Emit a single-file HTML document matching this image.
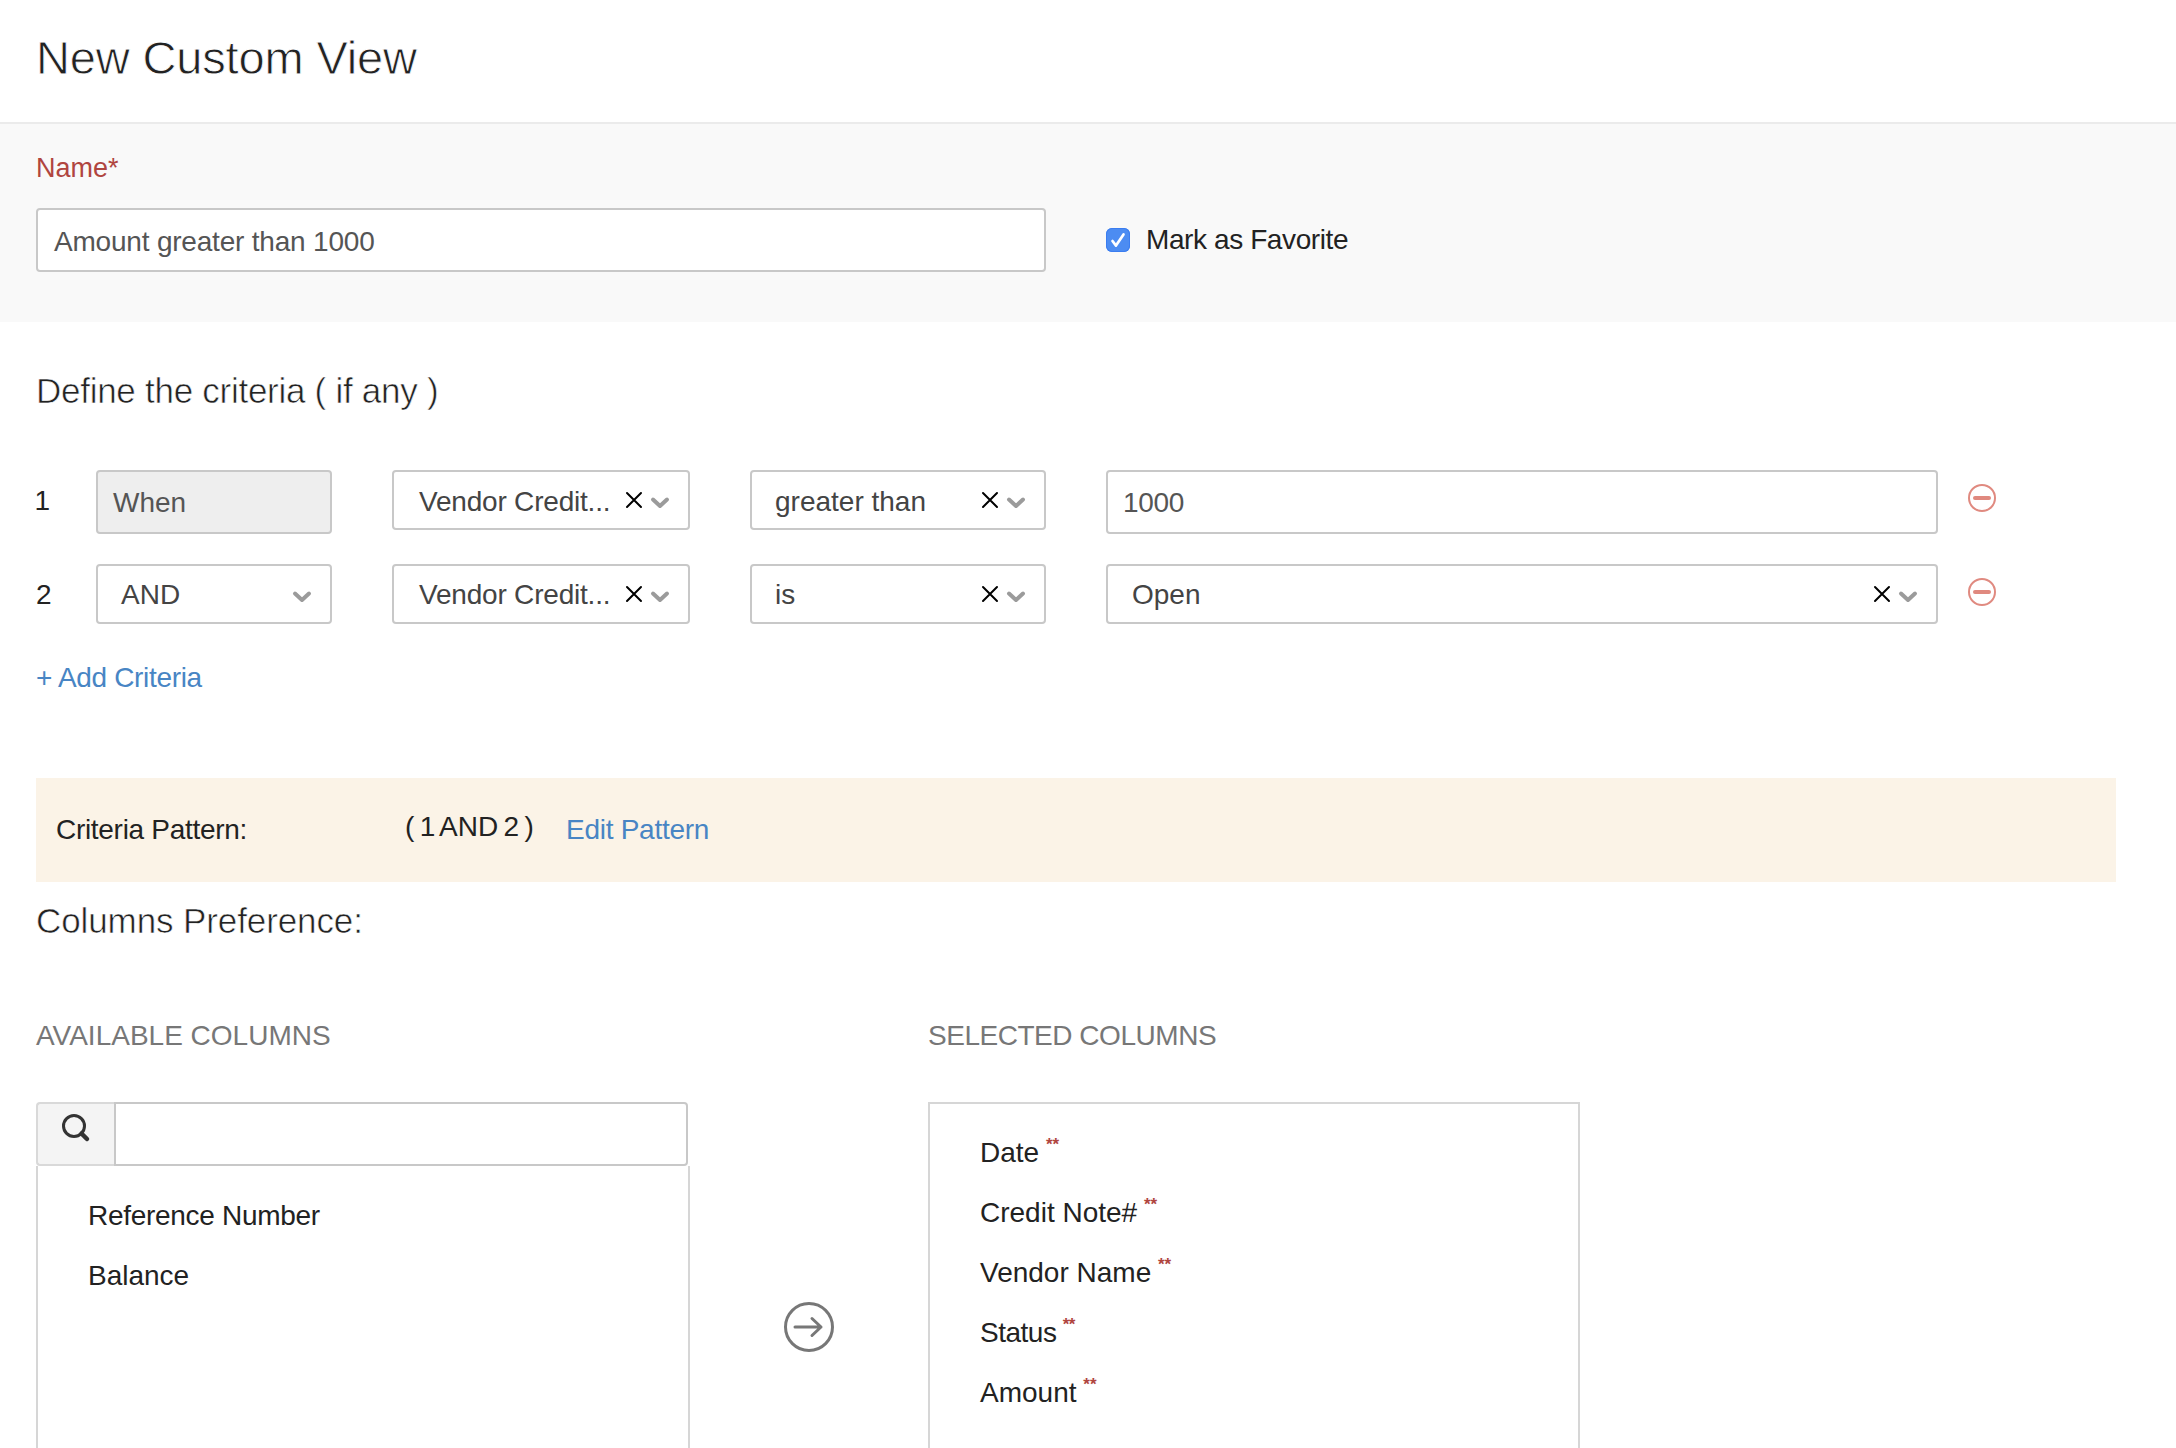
<!DOCTYPE html>
<html>
<head>
<meta charset="utf-8">
<style>
html,body{margin:0;padding:0;}
body{width:2176px;height:1448px;position:relative;overflow:hidden;background:#fff;font-family:"Liberation Sans",sans-serif;color:#222;}
.a{position:absolute;white-space:nowrap;}
.t28{font-size:28px;line-height:32px;}
.box{position:absolute;box-sizing:border-box;border:2px solid #c8c8c8;border-radius:4px;background:#fff;}
svg{position:absolute;overflow:visible;}
</style>
</head>
<body>
<!-- header -->
<div class="a" style="left:36px;top:32px;font-size:47px;line-height:52px;letter-spacing:-0.15px;color:#222;-webkit-text-stroke:0.8px #fff;">New Custom View</div>
<div class="a" style="left:0;top:122px;width:2176px;height:2px;background:#ebebeb;"></div>
<div class="a" style="left:0;top:124px;width:2176px;height:198px;background:#f9f9f9;"></div>

<div class="a t28" style="left:36px;top:152px;font-size:27px;color:#b0453f;">Name*</div>
<div class="box" style="left:36px;top:208px;width:1010px;height:64px;"></div>
<div class="a t28" style="left:54px;top:226px;letter-spacing:-0.2px;color:#555;">Amount greater than 1000</div>

<div class="a" style="left:1106px;top:228px;width:24px;height:24px;border-radius:6px;background:#4c8cf2;box-shadow:inset 0 0 0 1px #3b7df0;"></div>
<svg style="left:1106px;top:228px;" width="24" height="24"><path d="M6.5 13 L10 17.6 L17.5 6.4" fill="none" stroke="#fff" stroke-width="2.7" stroke-linecap="round" stroke-linejoin="round"/></svg>
<div class="a t28" style="left:1146px;top:224px;letter-spacing:-0.4px;color:#222;">Mark as Favorite</div>

<!-- criteria -->
<div class="a" style="left:36px;top:371px;font-size:35px;line-height:40px;letter-spacing:-0.27px;color:#222;-webkit-text-stroke:0.6px #fff;">Define the criteria ( if any )</div>

<div class="a t28" style="left:34.5px;top:485px;">1</div>
<div class="box" style="left:96px;top:470px;width:236px;height:64px;background:#eee;"></div>
<div class="a t28" style="left:113px;top:487px;color:#555;">When</div>

<div class="box" style="left:392px;top:470px;width:298px;height:60px;"></div>
<div class="a t28" style="left:419px;top:486px;letter-spacing:-0.2px;color:#444;">Vendor Credit...</div>
<div class="box" style="left:750px;top:470px;width:296px;height:60px;"></div>
<div class="a t28" style="left:775px;top:486px;color:#444;">greater than</div>
<div class="box" style="left:1106px;top:470px;width:832px;height:64px;"></div>
<div class="a t28" style="left:1123px;top:487px;letter-spacing:-0.3px;color:#555;">1000</div>

<div class="a t28" style="left:36px;top:579px;">2</div>
<div class="box" style="left:96px;top:564px;width:236px;height:60px;"></div>
<div class="a t28" style="left:121px;top:579px;color:#444;">AND</div>
<div class="box" style="left:392px;top:564px;width:298px;height:60px;"></div>
<div class="a t28" style="left:419px;top:579px;letter-spacing:-0.2px;color:#444;">Vendor Credit...</div>
<div class="box" style="left:750px;top:564px;width:296px;height:60px;"></div>
<div class="a t28" style="left:775px;top:579px;color:#444;">is</div>
<div class="box" style="left:1106px;top:564px;width:832px;height:60px;"></div>
<div class="a t28" style="left:1132px;top:579px;color:#444;">Open</div>



<div class="a t28" style="left:36px;top:662px;letter-spacing:-0.33px;color:#4885c4;">+ Add Criteria</div>

<!-- pattern band -->
<div class="a" style="left:36px;top:778px;width:2080px;height:104px;background:#fbf3e7;"></div>
<div class="a t28" style="left:56px;top:814px;letter-spacing:-0.3px;color:#222;">Criteria Pattern:</div>
<div class="a t28" style="left:405px;top:811px;word-spacing:-2.4px;color:#222;">( 1 AND 2 )</div>
<div class="a t28" style="left:566px;top:814px;letter-spacing:-0.27px;color:#4885c4;">Edit Pattern</div>

<div class="a" style="left:36px;top:901px;font-size:35px;line-height:40px;letter-spacing:-0.1px;color:#222;-webkit-text-stroke:0.6px #fff;">Columns Preference:</div>

<div class="a t28" style="left:36px;top:1020px;color:#777;">AVAILABLE COLUMNS</div>
<div class="a t28" style="left:928px;top:1020px;letter-spacing:-0.47px;color:#777;">SELECTED COLUMNS</div>

<!-- available -->
<div class="a" style="left:36px;top:1166px;width:654px;height:300px;box-sizing:border-box;border-left:2px solid #d6d6d6;border-right:2px solid #d6d6d6;"></div>
<div class="a" style="left:36px;top:1102px;width:78px;height:64px;box-sizing:border-box;background:#f4f4f4;border:2px solid #d9d9d9;border-right:none;border-radius:4px 0 0 4px;"></div>
<div class="box" style="left:114px;top:1102px;width:574px;height:64px;border-radius:0 4px 4px 0;"></div>
<div class="a t28" style="left:88px;top:1200px;letter-spacing:-0.3px;color:#222;">Reference Number</div>
<div class="a t28" style="left:88px;top:1260px;color:#222;">Balance</div>

<!-- selected -->
<div class="a" style="left:928px;top:1102px;width:652px;height:400px;box-sizing:border-box;border:2px solid #d6d6d6;"></div>
<div class="a t28" style="left:980px;top:1137px;color:#222;">Date <sup>**</sup></div>
<div class="a t28" style="left:980px;top:1197px;color:#222;">Credit Note# <sup>**</sup></div>
<div class="a t28" style="left:980px;top:1257px;color:#222;">Vendor Name <sup>**</sup></div>
<div class="a t28" style="left:980px;top:1317px;letter-spacing:-0.5px;color:#222;">Status <sup>**</sup></div>
<div class="a t28" style="left:980px;top:1377px;color:#222;">Amount <sup>**</sup></div>

<style>
sup{font-size:17px;font-weight:bold;color:#b0453f;vertical-align:0;position:relative;top:-12px;margin-left:-1px;}
</style>
<!-- icons: X + chevrons -->
<svg style="left:0;top:0;" width="2176" height="1448">
 <g fill="none" stroke="#000" stroke-width="2" stroke-linecap="round">
  <path d="M627 493 L641 507 M641 493 L627 507"/>
  <path d="M983 493 L997 507 M997 493 L983 507"/>
  <path d="M627 587 L641 601 M641 587 L627 601"/>
  <path d="M983 587 L997 601 M997 587 L983 601"/>
  <path d="M1875 587 L1889 601 M1889 587 L1875 601"/>
 </g>
 <g fill="none" stroke="#9b9b9b" stroke-width="4" stroke-linecap="round" stroke-linejoin="round">
  <path d="M653 499.5 L660 506 L667 499.5"/>
  <path d="M1009 499.5 L1016 506 L1023 499.5"/>
  <path d="M653 593.5 L660 600 L667 593.5"/>
  <path d="M1009 593.5 L1016 600 L1023 593.5"/>
  <path d="M1901 593.5 L1908 600 L1915 593.5"/>
  <path d="M295 593.5 L302 600 L309 593.5"/>
 </g>
 <g fill="none" stroke="#e08a80" stroke-width="2">
  <circle cx="1982" cy="498" r="13"/>
  <circle cx="1982" cy="592" r="13"/>
 </g>
 <g fill="none" stroke="#e0897f" stroke-width="4" stroke-linecap="round">
  <path d="M1975 498 L1989 498"/>
  <path d="M1975 592 L1989 592"/>
 </g>
 <!-- search icon -->
 <g fill="none" stroke="#333" stroke-linecap="round">
  <circle cx="74" cy="1126" r="10.5" stroke-width="3"/>
  <path d="M81.5 1133.5 L87 1139" stroke-width="4.5"/>
 </g>
 <!-- arrow circle -->
 <g fill="none" stroke="#777" stroke-linecap="round" stroke-linejoin="round">
  <circle cx="809" cy="1327" r="23.5" stroke-width="3"/>
  <path d="M795 1327 L821 1327 M812 1318.5 L821 1327 L812 1335.5" stroke-width="3"/>
 </g>
</svg>
</body>
</html>
